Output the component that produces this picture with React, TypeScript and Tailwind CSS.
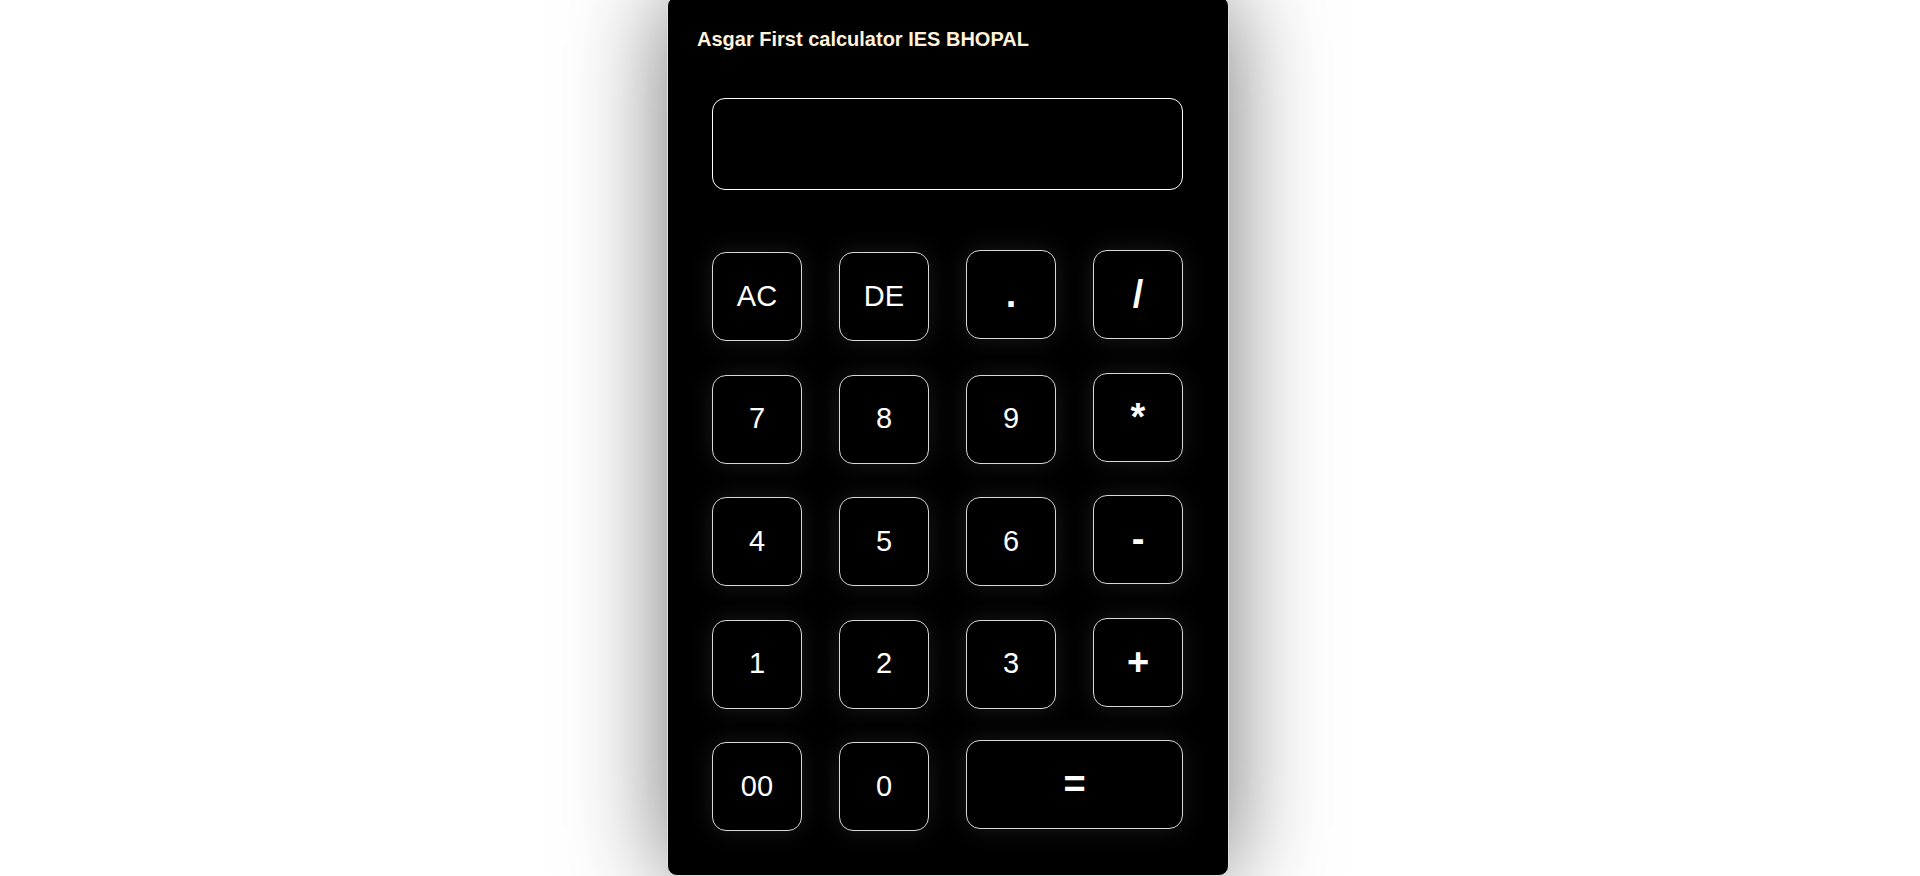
const keys = [
  { label: "AC", op: false },
  { label: "DE", op: false },
  { label: ".", op: true },
  { label: "/", op: true },
  { label: "7", op: false },
  { label: "8", op: false },
  { label: "9", op: false },
  { label: "*", op: true },
  { label: "4", op: false },
  { label: "5", op: false },
  { label: "6", op: false },
  { label: "-", op: true },
  { label: "1", op: false },
  { label: "2", op: false },
  { label: "3", op: false },
  { label: "+", op: true },
  { label: "00", op: false },
  { label: "0", op: false },
  { label: "=", op: true, wide: true },
];

export default function App() {
  return (
    <div
      className="min-h-[876px] bg-white"
      style={{ fontFamily: '"Liberation Sans", Arial, sans-serif' }}
    >
      <div className="ml-[667px] -mt-[4px] w-[562px] rounded-[10px] border border-[#e0e0e0] bg-black pt-[31px] pb-[44px] shadow-[0_0_100px_rgba(0,0,0,0.55)]">
        <h1 className="pl-[29px] text-[20px] leading-[23px] font-bold text-[#fff3dc]">
          Asgar First calculator IES BHOPAL
        </h1>

        {/* display */}
        <div className="mt-[47px] ml-[44px] h-[92px] w-[471px] rounded-[13px] border border-white bg-black" />

        {/* keypad */}
        <div className="mt-[62px] ml-[44px] grid grid-cols-[repeat(4,90px)] items-start gap-x-[37px] gap-y-[33.5px]">
          {keys.map((k) => (
            <button
              key={k.label}
              className={`flex h-[89px] items-center justify-center rounded-[14px] border border-[#d8d8d8] bg-black text-white shadow-[0_0_24px_rgba(255,255,255,0.1)] ${
                k.op ? "-mt-[2px] text-[38px] font-bold" : "text-[29px]"
              } ${k.wide ? "col-span-2 w-[217px]" : "w-[90px]"}`}
            >
              {k.label}
            </button>
          ))}
        </div>
      </div>
    </div>
  );
}
